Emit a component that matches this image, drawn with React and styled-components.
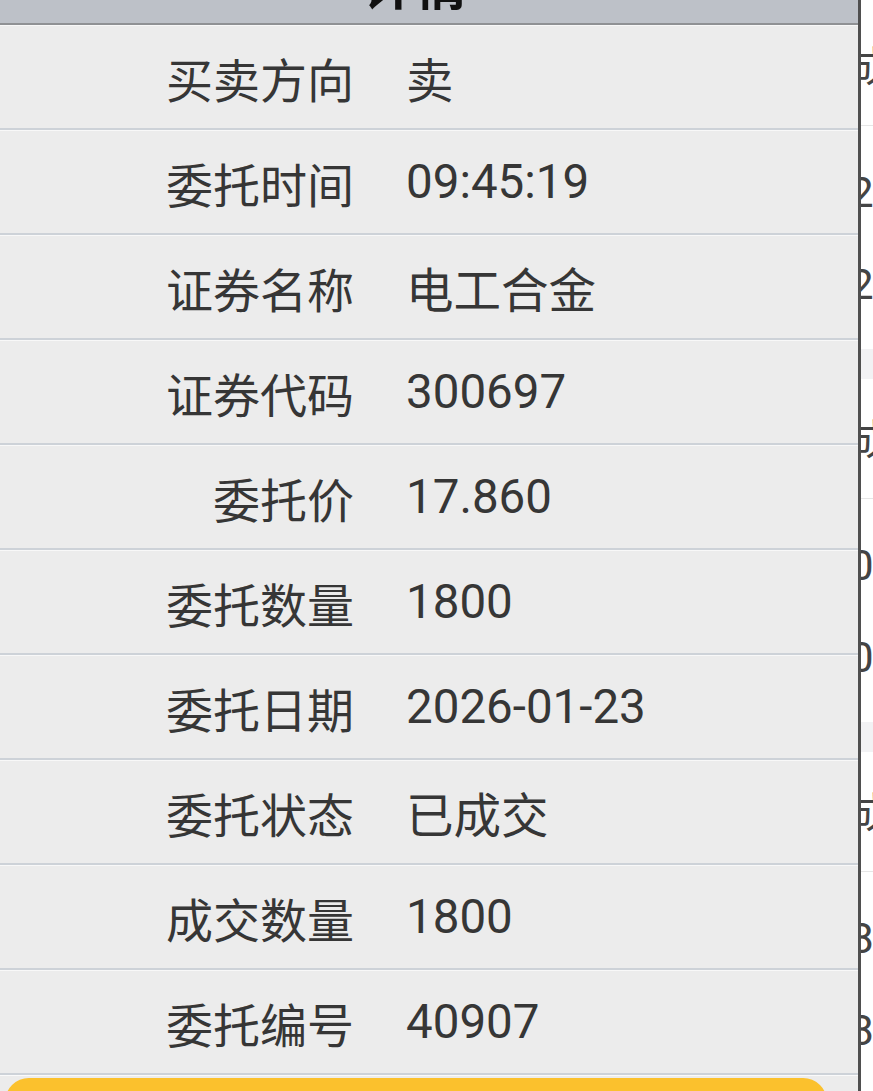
import styled, { createGlobalStyle } from 'styled-components'

const GlobalStyle = createGlobalStyle`
    html, body {
        margin: 0;
        padding: 0;
        background: #fff;
        overflow: hidden;
    }
    body {
        font-family: "Roboto", "Noto Sans CJK SC", sans-serif;
    }
`;

const Page = styled.div`
    position: relative;
    width: 873px;
    height: 1091px;
    overflow: hidden;
    padding-top: 6px;
    box-sizing: border-box;
`;

const Group = styled.section`
    color: #444;
    font-size: 42px;
    font-family: "Roboto", "Noto Sans CJK SC", sans-serif;
    white-space: nowrap;
`;

const GroupHead = styled.div`
    height: 120px;
    box-sizing: border-box;
    padding: 0 0 4px 850px;
    display: flex;
    align-items: center;
    border-bottom: 1px solid #e6e6e6;
`;

const GroupBody = styled.div`
    padding: 20px 0 19px 850px;
`;

const GroupRow = styled.div`
    height: 92px;
    display: flex;
    align-items: center;
`;

const Band = styled.div`
    height: 30px;
    background: #f2f2f4;
`;

const Dialog = styled.div`
    position: absolute;
    left: 0;
    top: -63px;
    width: 858px;
    border-right: 3px solid #4f4f4f;
    background: #ececec;
`;

const Header = styled.div`
    height: 88px;
    box-sizing: border-box;
    display: flex;
    align-items: flex-end;
    justify-content: center;
    padding: 0 28px 14px 0;
    background: #bdc1c8;
    border-bottom: 2px solid #8f9194;

    h3 {
        margin: 0;
        font-family: "Noto Sans CJK SC", sans-serif;
        font-size: 52px;
        line-height: 1;
        font-weight: 700;
        color: #111;
    }
`;

const Row = styled.div`
    display: grid;
    grid-template-columns: 354px 1fr;
    column-gap: 52px;
    align-items: center;
    height: 105px;
    box-sizing: border-box;
    border-top: 1px solid #f8f8f8;
    border-bottom: 2px solid #cdd2d8;
    color: #363636;
`;

const Label = styled.span`
    text-align: right;
    font-family: "Noto Sans CJK SC", sans-serif;
    font-size: 47px;
`;

const Value = styled.span`
    font-family: "Roboto", "Noto Sans CJK SC", sans-serif;
    font-size: 47.5px;
    white-space: nowrap;
`;

const Footer = styled.div`
    padding: 2px 31px 0 5px;
    border-top: 1px solid #fafafa;
`;

const ConfirmButton = styled.button`
    width: 100%;
    height: 120px;
    border: none;
    border-radius: 24px;
    background: #fbc12d;
    color: #333;
    font-family: "Noto Sans CJK SC", sans-serif;
    font-size: 46px;
`;

const details = [
    ['买卖方向', '卖'],
    ['委托时间', '09:45:19'],
    ['证券名称', '电工合金'],
    ['证券代码', '300697'],
    ['委托价', '17.860'],
    ['委托数量', '1800'],
    ['委托日期', '2026-01-23'],
    ['委托状态', '已成交'],
    ['成交数量', '1800'],
    ['委托编号', '40907'],
];

const orders = [
    { status: '成交', lines: ['2026-01-23', '2026-01-23'] },
    { status: '成交', lines: ['09:45:19', '09:45:19'] },
    { status: '成交', lines: ['8800', '8800'] },
];

const App = () => {
    return (
        <Page>
            <GlobalStyle />
            {orders.map((o, i) => (
                <Group key={i}>
                    <GroupHead>{o.status}</GroupHead>
                    <GroupBody>
                        {o.lines.map((l, j) => (
                            <GroupRow key={j}>{l}</GroupRow>
                        ))}
                    </GroupBody>
                    <Band />
                </Group>
            ))}

            <Dialog>
                <Header>
                    <h3>详情</h3>
                </Header>
                {details.map(([label, value]) => (
                    <Row key={label}>
                        <Label>{label}</Label>
                        <Value>{value}</Value>
                    </Row>
                ))}
                <Footer>
                    <ConfirmButton>确定</ConfirmButton>
                </Footer>
            </Dialog>
        </Page>
    );
};

export default App;
